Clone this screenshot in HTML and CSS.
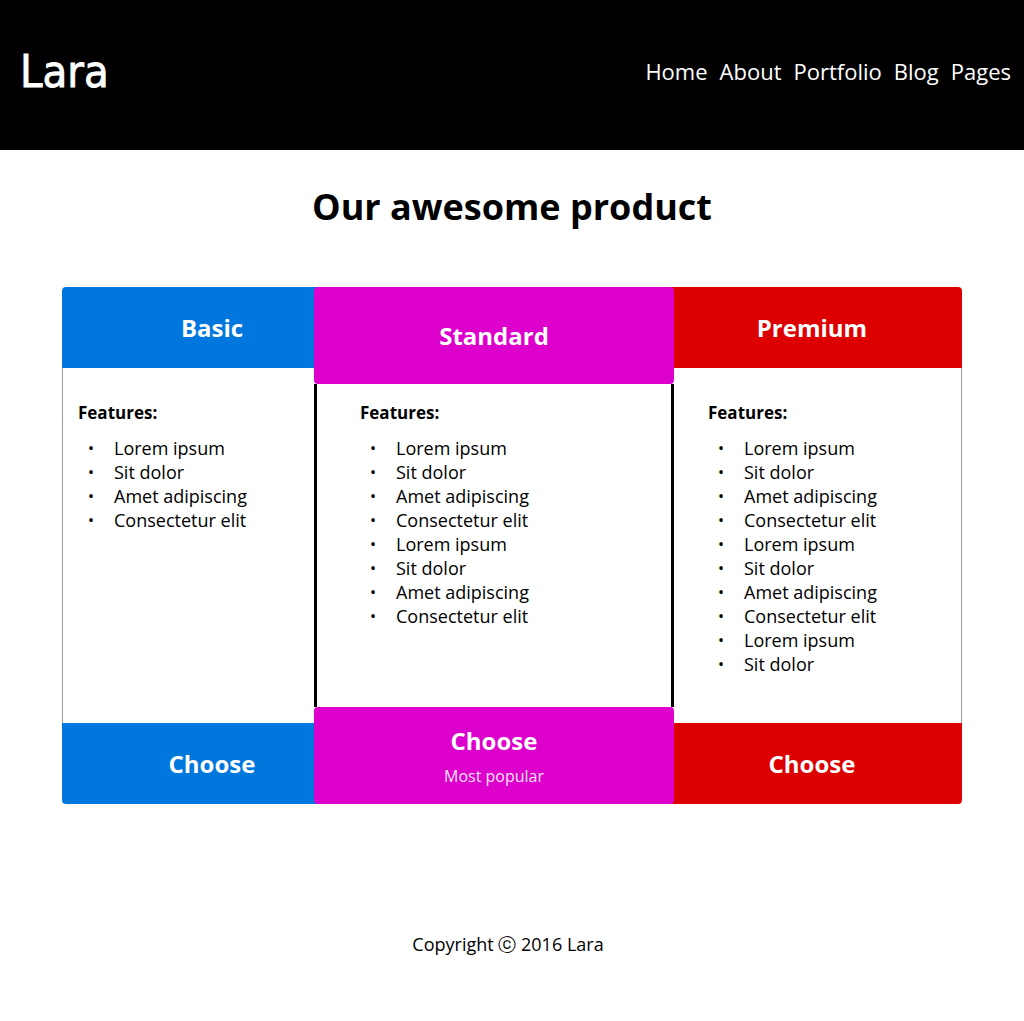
FILE: index.html
```html
<!DOCTYPE html>
<html lang="en">
<head>
<meta charset="utf-8">
<title>Lara</title>
<link rel="stylesheet" href="styles.css">
</head>
<body>
<header class="site-header">
  <div class="logo">Lara</div>
  <nav class="nav">
    <a href="#">Home</a>
    <a href="#">About</a>
    <a href="#">Portfolio</a>
    <a href="#">Blog</a>
    <a href="#">Pages</a>
  </nav>
</header>
<main class="main">
  <h1 class="title">Our awesome product</h1>
  <div class="pricing">
    <div class="plan plan-basic">
      <div class="plan-head">Basic</div>
      <div class="plan-body">
        <p class="features">Features:</p>
        <ul class="list">
          <li>Lorem ipsum</li>
          <li>Sit dolor</li>
          <li>Amet adipiscing</li>
          <li>Consectetur elit</li>
        </ul>
      </div>
      <div class="plan-foot">Choose</div>
    </div>
    <div class="plan plan-standard">
      <div class="plan-head">Standard</div>
      <div class="plan-body">
        <p class="features">Features:</p>
        <ul class="list">
          <li>Lorem ipsum</li>
          <li>Sit dolor</li>
          <li>Amet adipiscing</li>
          <li>Consectetur elit</li>
          <li>Lorem ipsum</li>
          <li>Sit dolor</li>
          <li>Amet adipiscing</li>
          <li>Consectetur elit</li>
        </ul>
      </div>
      <div class="plan-foot">
        <span class="choose">Choose</span>
        <span class="popular">Most popular</span>
      </div>
    </div>
    <div class="plan plan-premium">
      <div class="plan-head">Premium</div>
      <div class="plan-body">
        <p class="features">Features:</p>
        <ul class="list">
          <li>Lorem ipsum</li>
          <li>Sit dolor</li>
          <li>Amet adipiscing</li>
          <li>Consectetur elit</li>
          <li>Lorem ipsum</li>
          <li>Sit dolor</li>
          <li>Amet adipiscing</li>
          <li>Consectetur elit</li>
          <li>Lorem ipsum</li>
          <li>Sit dolor</li>
        </ul>
      </div>
      <div class="plan-foot">Choose</div>
    </div>
  </div>
</main>
<footer class="site-footer">Copyright ⓒ 2016 Lara</footer>
</body>
</html>
```

FILE: styles.css
```css
* { box-sizing: border-box; }

body {
  margin: 0;
  font-family: "Open Sans", "Noto Sans", sans-serif;
  color: #000;
  background: #fff;
}

.site-header {
  height: 150px;
  background: #000;
  display: flex;
  align-items: center;
  justify-content: space-between;
  padding: 0 13px 8px 20px;
}

.logo {
  font-family: "DejaVu Sans", sans-serif;
  font-stretch: condensed;
  font-size: 45px;
  color: #fff;
  line-height: 1;
  -webkit-text-stroke: 0.8px #fff;
}

.nav {
  display: flex;
  gap: 12px;
}

.nav a {
  color: #fff;
  text-decoration: none;
  font-size: 22px;
  line-height: 30px;
}

.main {
  padding-top: 33px;
}

.title {
  margin: 0;
  text-align: center;
  font-size: 36px;
  line-height: 48px;
  font-weight: 700;
}

.pricing {
  width: 900px;
  margin: 56px auto 0;
  display: flex;
}

.plan {
  width: 300px;
  flex: none;
  display: flex;
  flex-direction: column;
}

.plan-head,
.plan-foot {
  height: 81px;
  display: flex;
  align-items: center;
  justify-content: center;
  color: #fff;
  font-size: 24px;
  font-weight: 700;
}

.plan-body {
  flex: 1;
  padding: 33px 16px 47px;
}

.features {
  margin: 0;
  font-size: 17px;
  line-height: 24px;
  font-weight: 700;
}

.list {
  margin: 11px 0 0;
  padding-left: 10px;
  list-style: none;
  font-size: 18px;
  line-height: 24px;
}

.list li {
  display: flex;
}

.list li::before {
  content: "•";
  font-size: 16px;
  width: 26px;
  flex: none;
}

/* Basic */
.plan-basic .plan-head,
.plan-basic .plan-foot { background: #0077dd; }
.plan-basic .plan-head { border-radius: 4px 0 0 0; }
.plan-basic .plan-foot { border-radius: 0 0 0 4px; }
.plan-basic .plan-body {
  border-left: 1px solid #9a9a9a;
  padding-left: 15px;
}

/* Standard */
.plan-standard {
  width: 360px;
  margin: 0 -12px 0 -48px;
  position: relative;
  z-index: 1;
}
.plan-standard .plan-head,
.plan-standard .plan-foot {
  background: #dd00cc;
  height: 97px;
  border-radius: 4px;
}
.plan-standard .plan-body {
  border-left: 3px solid #000;
  border-right: 3px solid #000;
  padding: 17px 40px 0 43px;
}
.plan-standard .plan-foot {
  flex-direction: column;
  justify-content: flex-start;
  padding-top: 18px;
  gap: 8px;
}
.choose {
  line-height: 32px;
}
.popular {
  font-size: 16px;
  font-weight: 400;
  line-height: 22px;
  color: rgba(255, 255, 255, 0.9);
}

/* Premium */
.plan-premium .plan-head,
.plan-premium .plan-foot { background: #dd0000; }
.plan-premium .plan-head { border-radius: 0 4px 0 0; }
.plan-premium .plan-foot { border-radius: 0 0 4px 0; }
.plan-premium .plan-body {
  border-right: 1px solid #9a9a9a;
  padding-left: 46px;
}

.site-footer {
  margin-top: 128px;
  text-align: center;
  font-size: 18px;
  line-height: 24px;
  padding: 0 8px 40px 0;
}
```
